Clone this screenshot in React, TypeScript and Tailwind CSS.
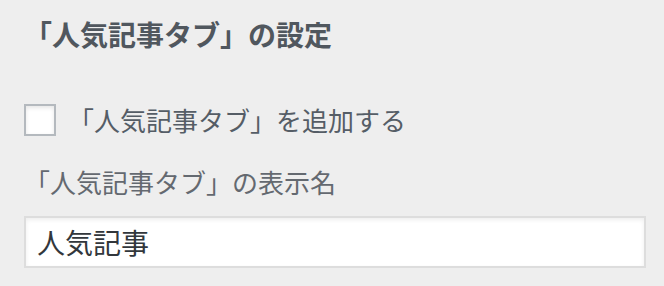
export default function App() {
  return (
    <div
      className="h-[286px] w-[664px] bg-[#eeeeee] px-6 pt-[14px]"
      style={{ fontFamily: '"Noto Sans CJK JP", "Noto Sans", sans-serif' }}
    >
      <h3 className="text-[28px] font-bold leading-[40px] text-[#50575e]">
        「人気記事タブ」の設定
      </h3>

      <label className="mt-[50px] flex items-center">
        <input
          type="checkbox"
          className="h-8 w-8 shrink-0 appearance-none border-2 border-[#b4b9be] bg-white shadow-[inset_0_2px_4px_rgba(0,0,0,0.1)]"
        />
        <span className="ml-[12px] text-[26px] leading-[32px] text-[#555d66]">
          「人気記事タブ」を追加する
        </span>
      </label>

      <p className="mt-[28px] text-[26px] leading-[36px] text-[#646970]">
        「人気記事タブ」の表示名
      </p>

      <input
        type="text"
        defaultValue="人気記事"
        className="mt-4 block h-[52px] w-[622px] border-2 border-[#dddddd] bg-white pl-[11px] text-[28px] text-[#32373c] shadow-[inset_0_2px_4px_rgba(0,0,0,0.07)] outline-none"
      />
    </div>
  );
}
